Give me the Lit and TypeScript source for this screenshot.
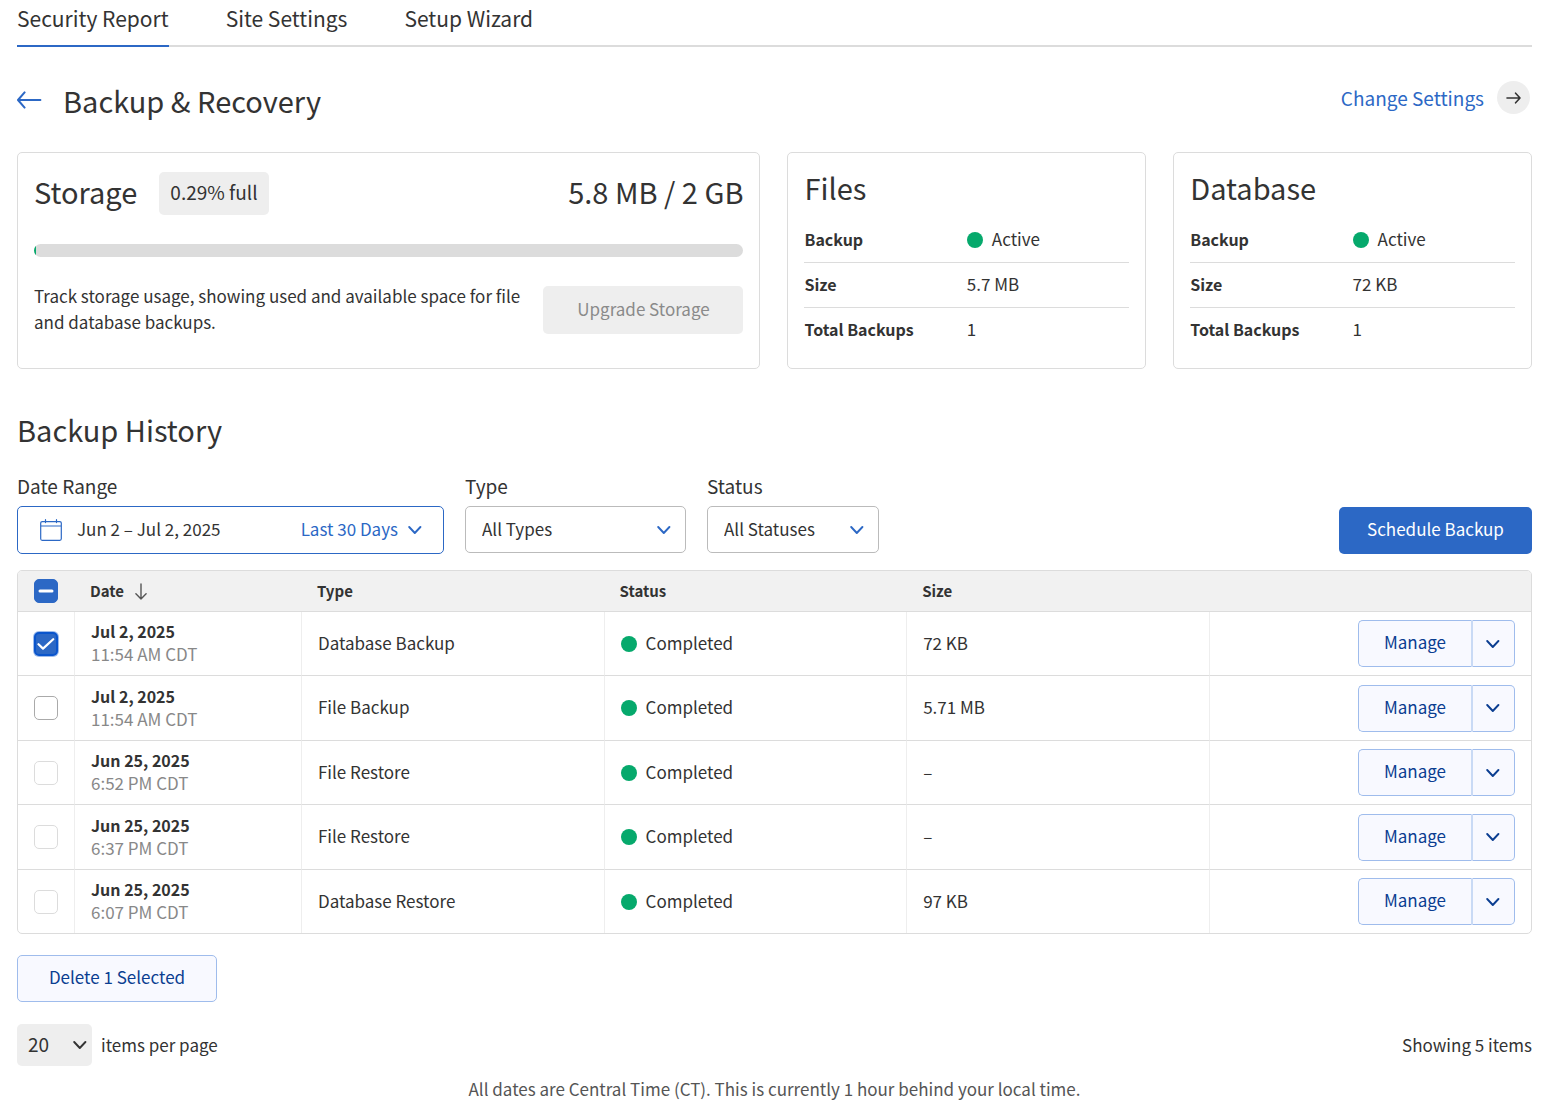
import { LitElement, html, css, nothing } from "lit";
import { customElement, property, state } from "lit/decorators.js";
import { classMap } from "lit/directives/class-map.js";
import { live } from "lit/directives/live.js";

interface BackupRow {
  date: string;
  time: string;
  type: string;
  status: string;
  size: string;
  restorable: boolean;
}

const ROWS: BackupRow[] = [
  { date: "Jul 2, 2025", time: "11:54 AM CDT", type: "Database Backup", status: "Completed", size: "72 KB", restorable: true },
  { date: "Jul 2, 2025", time: "11:54 AM CDT", type: "File Backup", status: "Completed", size: "5.71 MB", restorable: true },
  { date: "Jun 25, 2025", time: "6:52 PM CDT", type: "File Restore", status: "Completed", size: "–", restorable: false },
  { date: "Jun 25, 2025", time: "6:37 PM CDT", type: "File Restore", status: "Completed", size: "–", restorable: false },
  { date: "Jun 25, 2025", time: "6:07 PM CDT", type: "Database Restore", status: "Completed", size: "97 KB", restorable: false },
];

const base = css`
  *,
  *::before,
  *::after {
    box-sizing: border-box;
  }
  :host {
    display: block;
    color: #333;
    font-family: "Noto Sans CJK SC", "Noto Sans", sans-serif;
    font-size: 17px;
    line-height: 26px;
  }
  button,
  select,
  input {
    font: inherit;
    color: inherit;
    margin: 0;
  }
  button {
    padding: 0;
    border: 0;
    background: none;
    cursor: pointer;
  }
  a {
    color: inherit;
    text-decoration: none;
  }
  h1,
  h2,
  h3,
  p {
    margin: 0;
    font-weight: 400;
  }
  svg {
    display: block;
    flex: none;
    fill: none;
    stroke: currentColor;
  }
  table {
    width: 100%;
    border-spacing: 0;
    border-collapse: separate;
    table-layout: fixed;
  }
  th,
  td {
    padding: 0;
    text-align: left;
    font-weight: 400;
  }
  .dot {
    flex: none;
    width: 16px;
    height: 16px;
    border-radius: 50%;
    background: #06a96c;
  }
  .state {
    display: flex;
    align-items: center;
    gap: 9px;
  }
  /* Centres the letters, which sit low in their line box. */
  .text {
    display: block;
    padding-bottom: 2px;
  }
`;

const chevron = html`<svg width="14" height="10" viewBox="0 0 14 10" stroke-width="1.9" stroke-linecap="round" stroke-linejoin="round" aria-hidden="true">
  <path d="M1.2 2 6.8 8l5.6-6" />
</svg>`;

@customElement("summary-card")
class SummaryCard extends LitElement {
  @property() heading = "";
  @property() size = "";
  @property() total = "";

  static styles = [
    base,
    css`
      .card {
        height: 100%;
        padding: 16px;
        border: 1px solid #dcdcdc;
        border-radius: 5px;
      }
      h2 {
        margin-bottom: 13px;
        font-size: 29px;
        line-height: 36px;
      }
      th,
      td {
        height: 45px;
        border-bottom: 1px solid #dcdcdc;
      }
      th {
        font-size: 16px;
        font-weight: 600;
      }
      tr:last-child > * {
        height: 43px;
        border-bottom: 0;
      }
    `,
  ];

  render() {
    return html`
      <section class="card">
        <h2>${this.heading}</h2>
        <table>
          <tr>
            <th scope="row"><span class="text">Backup</span></th>
            <td><span class="state"><span class="dot"></span><span class="text">Active</span></span></td>
          </tr>
          <tr>
            <th scope="row"><span class="text">Size</span></th>
            <td><span class="text">${this.size}</span></td>
          </tr>
          <tr>
            <th scope="row"><span class="text">Total Backups</span></th>
            <td><span class="text">${this.total}</span></td>
          </tr>
        </table>
      </section>
    `;
  }
}

@customElement("app-root")
class AppRoot extends LitElement {
  @state() private selected = new Set<number>([0]);

  static styles = [
    base,
    css`
      .page {
        padding: 0 20px 12px 17px;
      }
      .tabs {
        display: flex;
        gap: 57px;
        border-bottom: 2px solid #dcdcdc;
        font-size: 21px;
        line-height: 30px;
      }
      .tab {
        margin-bottom: -2px;
        padding: 3px 0 12px;
        border-bottom: 2px solid transparent;
      }
      .tab.current {
        border-bottom-color: #2c68c5;
      }
      .title-row {
        display: flex;
        justify-content: space-between;
        align-items: flex-start;
        padding: 34px 2px 33px 0;
      }
      .title {
        display: flex;
        align-items: center;
        gap: 21px;
      }
      .back {
        color: #2c68c5;
      }
      h1 {
        font-size: 29px;
        line-height: 38px;
      }
      .settings {
        display: flex;
        align-items: center;
        gap: 13px;
        color: #2c68c5;
        font-size: 19px;
      }
      .round {
        display: grid;
        place-items: center;
        width: 33px;
        height: 33px;
        border-radius: 50%;
        background: #eee;
        color: #333;
      }
      .cards {
        display: grid;
        grid-template-columns: 744fr 359fr 359fr;
        gap: 27px;
      }
      .storage {
        padding: 19px 16px 31px;
        border: 1px solid #dcdcdc;
        border-radius: 5px;
      }
      .storage-head {
        display: flex;
        align-items: flex-start;
        gap: 22px;
      }
      .storage-head h2,
      .usage {
        font-size: 29px;
        line-height: 39px;
      }
      .usage {
        margin-left: auto;
      }
      .badge {
        padding: 7px 11px 10px;
        border-radius: 5px;
        background: #eee;
        font-size: 19px;
      }
      .bar {
        height: 13px;
        margin: 29px 0 26px;
        border-radius: 7px;
        background: #dcdcdc;
        overflow: hidden;
      }
      .fill {
        height: 100%;
        background: #06a96c;
      }
      .storage-foot {
        display: flex;
        align-items: center;
        justify-content: space-between;
        gap: 16px;
      }
      .button {
        height: 47px;
        padding: 0 24px 3px;
        border-radius: 5px;
        white-space: nowrap;
      }
      .upgrade {
        min-width: 200px;
        height: 48px;
        background: #eee;
        color: #8a8a8a;
        cursor: default;
      }
      .history-title {
        margin: 39px 0 23px;
        font-size: 29px;
        line-height: 42px;
      }
      .filters {
        display: flex;
        align-items: flex-start;
        gap: 21px;
        margin-bottom: 16px;
      }
      .field {
        display: flex;
        flex-direction: column;
        gap: 7px;
      }
      .field > label {
        font-size: 19px;
      }
      .range {
        display: flex;
        align-items: center;
        width: 427px;
        height: 48px;
        padding: 0 21px 0 22px;
        border: 1px solid #2c68c5;
        border-radius: 5px;
        background: #fff;
      }
      .range > .text {
        margin-left: 15px;
      }
      .preset {
        display: flex;
        align-items: center;
        gap: 10px;
        margin-left: auto;
        color: #2c68c5;
      }
      .blue {
        color: #2c68c5;
      }
      .pick {
        display: grid;
        align-items: center;
      }
      .pick > * {
        grid-area: 1 / 1;
      }
      .pick > svg {
        justify-self: end;
        margin-right: 15px;
        color: #2c68c5;
        pointer-events: none;
      }
      .pick select {
        appearance: none;
        height: 47px;
        padding: 0 16px 2px;
        border: 1px solid #bbb;
        border-radius: 5px;
        background: #fff;
      }
      .pick .type {
        width: 221px;
      }
      .pick .status {
        width: 172px;
      }
      .schedule {
        align-self: flex-end;
        min-width: 193px;
        margin-left: auto;
        background: #2c68c5;
        color: #fff;
      }
      .history {
        border: 1px solid #dcdcdc;
        border-radius: 5px;
        overflow: hidden;
      }
      .history thead th {
        height: 41px;
        padding: 0 16px;
        border-bottom: 1px solid #dcdcdc;
        background: #f1f1f1;
        font-size: 15px;
        font-weight: 600;
      }
      .history td {
        height: 64px;
        padding: 0 16px;
        border-bottom: 1px solid #dcdcdc;
      }
      .history tbody tr:nth-child(even) td {
        height: 65px;
      }
      .history tbody tr:last-child td {
        height: 63px;
        border-bottom: 0;
      }
      .history td + td {
        border-left: 1px solid #eee;
      }
      .col-check {
        width: 56px;
      }
      .col-date {
        width: 15%;
      }
      .col-data {
        width: 20%;
      }
      .sort {
        display: flex;
        align-items: center;
        gap: 11px;
        font-weight: 600;
      }
      .sort svg {
        color: #555;
      }
      .check {
        display: grid;
        place-items: center;
        width: 24px;
        height: 24px;
      }
      .check > * {
        grid-area: 1 / 1;
      }
      .check input {
        appearance: none;
        width: 24px;
        height: 24px;
        border: 1px solid #aaa;
        border-radius: 5px;
        background: #fff;
      }
      .check input:disabled {
        border-color: #dcdcdc;
      }
      .check input:indeterminate {
        border-color: #2c68c5;
        background: #2c68c5;
      }
      .check input:checked {
        border: 2px solid #0a55cc;
        background: #2c68c5;
        box-shadow: 0 0 0 1px #0a55cc66;
      }
      .check svg {
        z-index: 1;
        color: #fff;
        pointer-events: none;
      }
      .date {
        display: block;
        font-size: 16px;
        font-weight: 600;
        line-height: 23px;
      }
      .time {
        display: block;
        padding-bottom: 2px;
        color: #888;
        line-height: 22px;
      }
      .actions {
        display: flex;
        justify-content: flex-end;
      }
      .soft {
        border: 1px solid #9fbcec;
        background: #f8f9ff;
        color: #0b3e91;
      }
      .manage {
        width: 114px;
        border-right: 1px solid #c9daf5;
        border-radius: 5px 0 0 5px;
      }
      .more {
        display: grid;
        place-items: center;
        width: 43px;
        padding: 0 2px 0 0;
        border-left: 1px solid #c9daf5;
        border-radius: 0 5px 5px 0;
      }
      .delete {
        min-width: 200px;
        margin: 21px 0 22px;
      }
      .pager {
        display: flex;
        align-items: center;
        gap: 9px;
      }
      .pick .per-page {
        width: 75px;
        height: 42px;
        padding: 0 11px 2px;
        border: 0;
        background: #eee;
        font-size: 19px;
      }
      .pick .per-page + svg {
        margin-right: 5px;
        color: #333;
      }
      .count {
        margin-left: auto;
      }
      .note {
        margin-top: 10px;
        color: #555;
        text-align: center;
      }
    `,
  ];

  private toggle(index: number) {
    const next = new Set(this.selected);
    if (next.has(index)) next.delete(index);
    else next.add(index);
    this.selected = next;
  }

  private toggleAll() {
    const all = ROWS.flatMap((row, i) => (row.restorable ? [i] : []));
    this.selected = this.selected.size === all.length ? new Set() : new Set(all);
  }

  private renderRow(row: BackupRow, index: number) {
    const checked = this.selected.has(index);
    return html`
      <tr>
        <td>
          <span class="check">
            <input
              type="checkbox"
              aria-label="Select ${row.type}, ${row.date} ${row.time}"
              .checked=${live(checked)}
              ?disabled=${!row.restorable}
              @change=${() => this.toggle(index)}
            />
            ${checked
              ? html`<svg width="18" height="14" viewBox="0 0 18 14" stroke-width="2.2" stroke-linecap="round" stroke-linejoin="round" aria-hidden="true">
                  <path d="M1.5 7.2 6 11.6 16.2 2.2" />
                </svg>`
              : nothing}
          </span>
        </td>
        <td><span class="date">${row.date}</span><span class="time">${row.time}</span></td>
        <td><span class="text">${row.type}</span></td>
        <td><span class="state"><span class="dot"></span><span class="text">${row.status}</span></span></td>
        <td><span class="text">${row.size}</span></td>
        <td>
          <div class="actions">
            <button class="button soft manage" type="button">Manage</button>
            <button class="button soft more" type="button" aria-label="More actions">${chevron}</button>
          </div>
        </td>
      </tr>
    `;
  }

  render() {
    const count = this.selected.size;
    const percent = 0.29;
    return html`
      <div class="page">
        <nav class="tabs">
          ${["Security Report", "Site Settings", "Setup Wizard"].map(
            (tab, i) => html`<a href="#" class=${classMap({ tab: true, current: i === 0 })}>${tab}</a>`
          )}
        </nav>

        <header class="title-row">
          <div class="title">
            <a class="back" href="#" aria-label="Back">
              <svg width="25" height="18" viewBox="0 0 25 18" stroke-width="2" stroke-linecap="round" stroke-linejoin="round">
                <path d="M23.4 9H1.5M7.6 1.4 1 9 7.6 16.6" />
              </svg>
            </a>
            <h1>Backup &amp; Recovery</h1>
          </div>
          <a class="settings" href="#">
            Change Settings
            <span class="round">
              <svg width="15" height="12" viewBox="0 0 15 12" stroke-width="1.6" stroke-linecap="round" stroke-linejoin="round" aria-hidden="true">
                <path d="M1 6H14M9.6 1.2 14 6 9.6 10.8" />
              </svg>
            </span>
          </a>
        </header>

        <div class="cards">
          <section class="storage">
            <div class="storage-head">
              <h2>Storage</h2>
              <span class="badge">${percent}% full</span>
              <span class="usage">5.8 MB / 2 GB</span>
            </div>
            <div class="bar"><div class="fill" style="width: ${percent}%"></div></div>
            <div class="storage-foot">
              <p class="text">Track storage usage, showing used and available space for file and database backups.</p>
              <button class="button upgrade" type="button" disabled>Upgrade Storage</button>
            </div>
          </section>
          <summary-card heading="Files" size="5.7 MB" total="1"></summary-card>
          <summary-card heading="Database" size="72 KB" total="1"></summary-card>
        </div>

        <h2 class="history-title">Backup History</h2>

        <div class="filters">
          <div class="field">
            <label for="range">Date Range</label>
            <button class="range" id="range" type="button">
              <svg class="blue" width="22" height="22" viewBox="0 0 22 22" stroke-width="1.2" stroke-linecap="round" aria-hidden="true">
                <path d="M2.2 2.6H19.8Q21.3 2.6 21.3 4.1V19.8Q21.3 21.3 19.8 21.3H2.2Q.7 21.3.7 19.8V4.1Q.7 2.6 2.2 2.6ZM.7 7H21.3M5.5.7V3.6M16.5.7V3.6" />
              </svg>
              <span class="text">Jun 2 – Jul 2, 2025</span>
              <span class="preset"><span class="text">Last 30 Days</span>${chevron}</span>
            </button>
          </div>
          <div class="field">
            <label for="type">Type</label>
            <span class="pick">
              <select class="type" id="type">
                <option>All Types</option>
              </select>
              ${chevron}
            </span>
          </div>
          <div class="field">
            <label for="status">Status</label>
            <span class="pick">
              <select class="status" id="status">
                <option>All Statuses</option>
              </select>
              ${chevron}
            </span>
          </div>
          <button class="button schedule" type="button">Schedule Backup</button>
        </div>

        <div class="history">
          <table>
            <colgroup>
              <col class="col-check" />
              <col class="col-date" />
              <col class="col-data" />
              <col class="col-data" />
              <col class="col-data" />
              <col />
            </colgroup>
            <thead>
              <tr>
                <th>
                  <span class="check">
                    <input
                      type="checkbox"
                      aria-label="Select all"
                      .indeterminate=${count === 1}
                      .checked=${live(count > 1)}
                      @change=${this.toggleAll}
                    />
                    <svg width="16" height="4" viewBox="0 0 16 4" stroke-width="3" stroke-linecap="round" aria-hidden="true">
                      <path d="M2 2H14" />
                    </svg>
                  </span>
                </th>
                <th scope="col">
                  <button class="sort" type="button">
                    Date
                    <svg width="12" height="17" viewBox="0 0 12 17" stroke-width="1.4" stroke-linecap="round" stroke-linejoin="round" aria-hidden="true">
                      <path d="M6 1V16M.9 10.8 6 16 11.1 10.8" />
                    </svg>
                  </button>
                </th>
                <th scope="col">Type</th>
                <th scope="col">Status</th>
                <th scope="col">Size</th>
                <th></th>
              </tr>
            </thead>
            <tbody>
              ${ROWS.map((row, i) => this.renderRow(row, i))}
            </tbody>
          </table>
        </div>

        <button class="button soft delete" type="button">Delete ${count} Selected</button>

        <footer class="pager">
          <span class="pick">
            <select class="per-page" id="per-page">
              <option>20</option>
            </select>
            ${chevron}
          </span>
          <label for="per-page">items per page</label>
          <span class="count">Showing ${ROWS.length} items</span>
        </footer>
        <p class="note">All dates are Central Time (CT). This is currently 1 hour behind your local time.</p>
      </div>
    `;
  }
}
